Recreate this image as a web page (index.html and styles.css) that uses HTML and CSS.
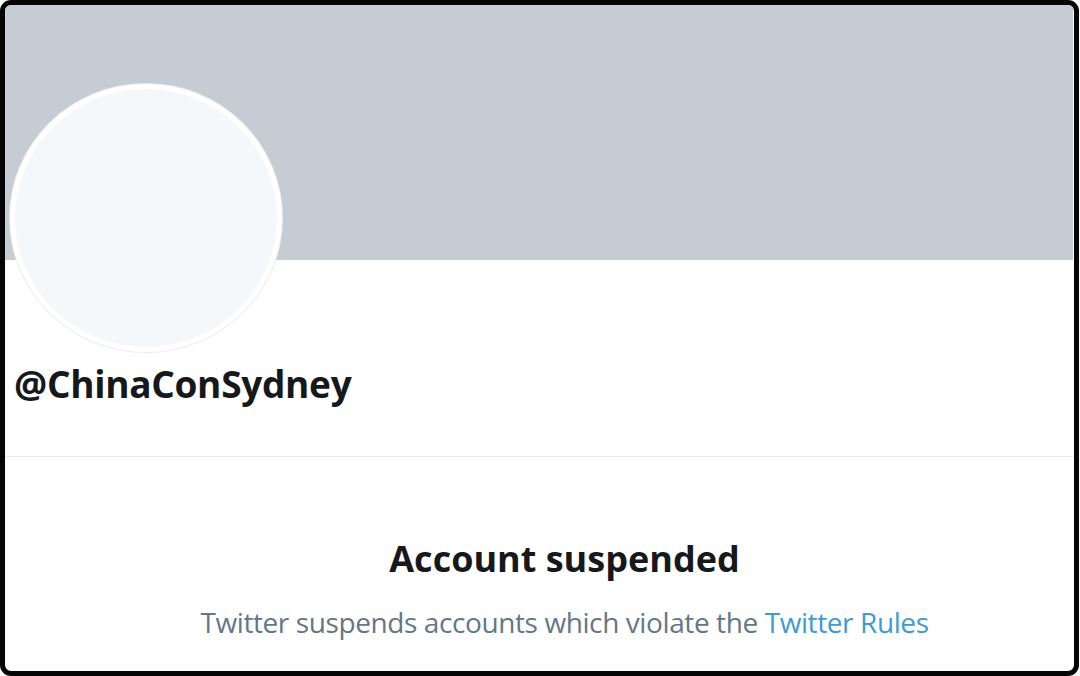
FILE: index.html
```html
<!DOCTYPE html>
<html lang="en">
<head>
<meta charset="utf-8">
<title>@ChinaConSydney</title>
<link rel="stylesheet" href="styles.css">
</head>
<body>
<div class="frame">
  <div class="banner"></div>
  <div class="profile">
    <div class="avatar"></div>
    <div class="handle">@ChinaConSydney</div>
  </div>
  <div class="divider"></div>
  <div class="notice">
    <h1 class="notice-title">Account suspended</h1>
    <p class="notice-text">Twitter suspends accounts which violate the <a class="notice-link" href="#">Twitter Rules</a></p>
  </div>
</div>
</body>
</html>
```

FILE: styles.css
```css
html, body {
  margin: 0;
  padding: 0;
  background: #ffffff;
}

.frame {
  box-sizing: border-box;
  width: 1079px;
  height: 676px;
  border: 5px solid #050505;
  border-radius: 11px;
  overflow: hidden;
  background: #ffffff;
  font-family: "Open Sans", "Noto Sans", sans-serif;
}

.banner {
  height: 255px;
  margin-right: 1px;
  background: #c6ccd3;
}

.profile {
  padding-left: 5px;
}

.avatar {
  box-sizing: border-box;
  width: 272px;
  height: 268px;
  margin-top: -176px;
  border-radius: 50%;
  border: 5px solid #ffffff;
  background: #f5f8fa;
  box-shadow: 0 0 0 1px #e9edf0;
}

.handle {
  margin-top: 10px;
  padding-left: 4px;
  font-size: 37px;
  line-height: 44px;
  font-weight: 700;
  letter-spacing: -0.3px;
  color: #16191c;
}

.divider {
  margin-top: 50px;
  height: 1px;
  background: #e6ecf0;
}

.notice {
  padding-left: 50px;
  text-align: center;
}

.notice-title {
  margin: 80px 0 0;
  font-size: 36px;
  line-height: 44px;
  font-weight: 700;
  color: #16191c;
}

.notice-text {
  margin: 24px 0 0;
  font-size: 28px;
  line-height: 34px;
  letter-spacing: -0.4px;
  color: #657786;
}

.notice-link {
  color: #3d9bd6;
  text-decoration: none;
}
```
